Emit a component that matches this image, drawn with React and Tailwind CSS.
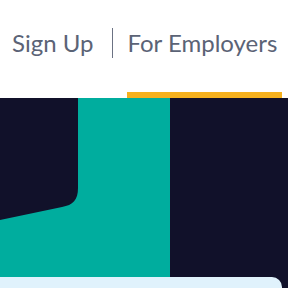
export default function App() {
  return (
    <div className="w-[288px] h-[288px] overflow-hidden bg-white" style={{ fontFamily: "Lato, 'Open Sans', sans-serif" }}>
      <div className="h-[98px] flex flex-col">
        <div className="flex items-center h-[92px] pb-[6px] text-[24px] text-[#5b6376] leading-none">
          <span className="ml-[12px]">Sign Up</span>
          <span className="ml-[19px] w-px h-[30px] bg-[#6b7283]"></span>
          <span className="ml-[14px]">For Employers</span>
        </div>
        <div className="ml-[127px] w-[155px] h-[6px] bg-[#f6b11e]"></div>
      </div>
      <div className="h-[190px] bg-[#11112a] flex flex-col">
        <div className="flex h-[179px]">
          <div className="w-[170px] h-full bg-[#00ad9e]">
            <svg width="170" height="179" viewBox="0 0 170 179" className="block">
              <path d="M0 0 H78 V90 C78 102 73 107 62 109 L0 122 Z" fill="#11112a" />
            </svg>
          </div>
        </div>
        <div className="w-[282px] flex-1 bg-[#e0f2fc] rounded-tr-[10px]"></div>
      </div>
    </div>
  );
}
